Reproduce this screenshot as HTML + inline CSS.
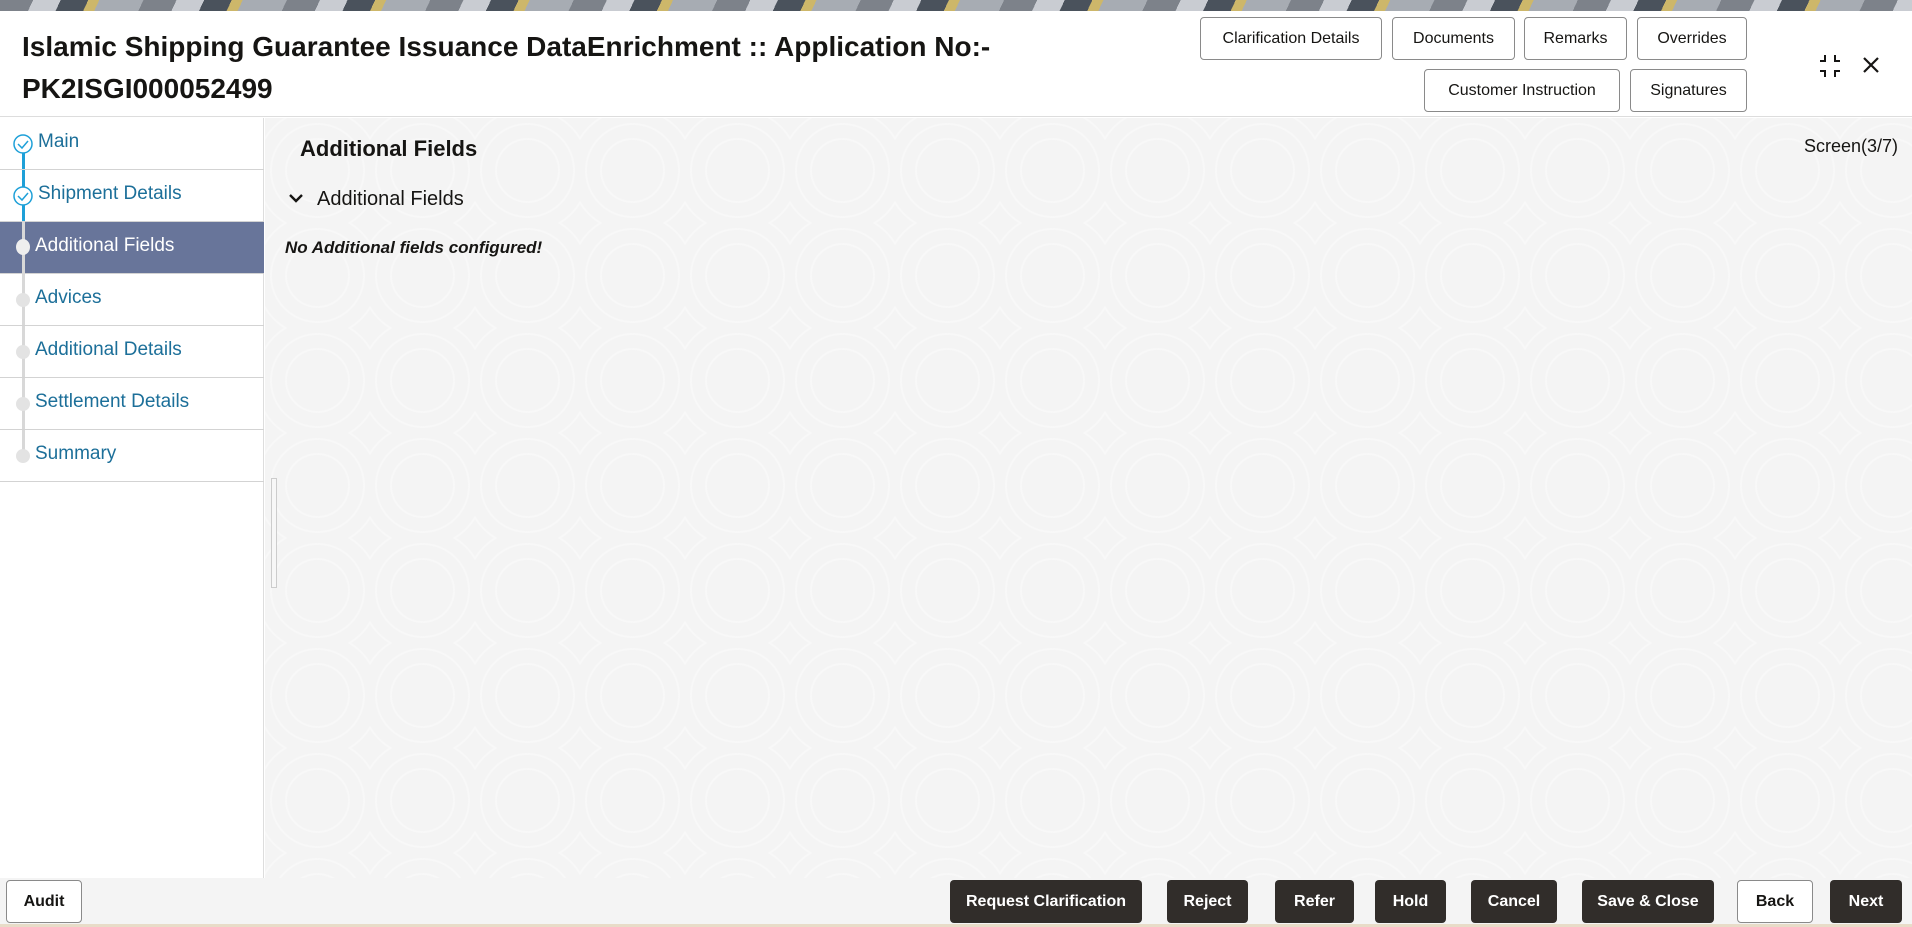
<!DOCTYPE html>
<html><head><meta charset="utf-8"><style>
*{box-sizing:border-box;margin:0;padding:0}
body{width:1912px;height:927px;overflow:hidden;font-family:"Liberation Sans",sans-serif;background:#fff;position:relative}
.banner{position:absolute;left:0;top:0;width:1912px;height:11px;background:repeating-linear-gradient(115deg,#7d828a 0 30px,#c9ccd2 30px 55px,#4a525c 55px 80px,#cdb76a 80px 90px,#a7acb3 90px 130px)}
.hdr{position:absolute;left:0;top:11px;width:1912px;height:106px;background:#fff;border-bottom:1px solid #ddd}
.title{position:absolute;left:22px;top:15px;font-size:28px;font-weight:bold;color:#161513;line-height:42px}
.ob{position:absolute;height:43px;border:1px solid #8a8a8a;border-radius:4px;background:#fff;font-size:16px;color:#161513;display:flex;align-items:center;justify-content:center}
.side{position:absolute;left:0;top:118px;width:264px;height:760px;background:#fff;border-right:1px solid #ddd}
.it{position:absolute;left:0;width:264px;height:52px;border-bottom:1px solid #d3d3d3;font-size:19px;color:#1c6f99;padding-left:35px;line-height:48px}
.it.act{background:#68759a;color:#fff}
.vl{position:absolute;left:22px;width:3px}
.dot{position:absolute;left:16px;width:14px;height:14px;border-radius:50%;background:#e3e3e3}
.main{position:absolute;left:265px;top:118px;width:1647px;height:762px;background:#f4f4f4;background-image:radial-gradient(circle at 50% 50%,transparent 0 30px,rgba(255,255,255,.35) 31px 32px,transparent 33px 45px,rgba(255,255,255,.35) 46px 47px,transparent 48px 60px,rgba(255,255,255,.35) 61px 62px,transparent 63px);background-size:105px 105px}
.foot{position:absolute;left:0;top:878px;width:1912px;height:46px;background:#f4f4f4}
.db{position:absolute;top:880px;height:43px;background:#312d2a;color:#fff;border-radius:4px;font-size:16px;font-weight:bold;display:flex;align-items:center;justify-content:center}
.wb{position:absolute;top:880px;height:43px;background:#fff;color:#161513;border:1px solid #8a8a8a;border-radius:4px;font-size:16px;font-weight:bold;display:flex;align-items:center;justify-content:center}
</style></head><body>
<div class="banner"></div>
<div class="hdr">
<div class="title">Islamic Shipping Guarantee Issuance DataEnrichment :: Application No:-<br>PK2ISGI000052499</div>
</div>
<div class="ob" style="left:1200px;top:17px;width:182px">Clarification Details</div>
<div class="ob" style="left:1392px;top:17px;width:123px">Documents</div>
<div class="ob" style="left:1524px;top:17px;width:103px">Remarks</div>
<div class="ob" style="left:1637px;top:17px;width:110px">Overrides</div>
<div class="ob" style="left:1424px;top:69px;width:196px">Customer Instruction</div>
<div class="ob" style="left:1630px;top:69px;width:117px">Signatures</div>
<svg style="position:absolute;left:1816px;top:52px" width="28" height="28" viewBox="0 0 28 28" fill="none" stroke="#161513" stroke-width="2"><path d="M9 3v6H4M19 3v6h5M9 25v-6H4M19 25v-6h5"/></svg>
<svg style="position:absolute;left:1862px;top:56px" width="18" height="18" viewBox="0 0 18 18" stroke="#161513" stroke-width="2.2"><path d="M2 2L16 16M16 2L2 16"/></svg>

<div class="side">
<div class="vl" style="top:26px;height:96px;background:#1ea0d8"></div>
<div class="vl" style="top:122px;height:212px;background:#d8d8d8"></div>
<div class="it" style="top:0"><span style="padding-left:3px">Main</span></div>
<div class="it" style="top:52px"><span style="padding-left:3px">Shipment Details</span></div>
<div class="it act" style="top:104px">Additional Fields</div>
<div class="it" style="top:156px">Advices</div>
<div class="it" style="top:208px">Additional Details</div>
<div class="it" style="top:260px">Settlement Details</div>
<div class="it" style="top:312px">Summary</div>
<div class="vl" style="top:104px;height:52px;background:#d8d8d8"></div>
<svg style="position:absolute;left:12px;top:15px" width="22" height="22" viewBox="0 0 22 22" fill="#fff" stroke="#1ea0d8" stroke-width="1.5"><circle cx="11" cy="11" r="9"/><path d="M6 11l4 4 6-7" fill="none"/></svg>
<svg style="position:absolute;left:12px;top:67px" width="22" height="22" viewBox="0 0 22 22" fill="#fff" stroke="#1ea0d8" stroke-width="1.5"><circle cx="11" cy="11" r="9"/><path d="M6 11l4 4 6-7" fill="none"/></svg>
<div class="dot" style="top:121px;background:#eee;height:16px"></div>
<div class="dot" style="top:175px"></div>
<div class="dot" style="top:227px"></div>
<div class="dot" style="top:279px"></div>
<div class="dot" style="top:331px"></div>
</div>

<div class="main">
<div style="position:absolute;left:35px;top:18px;font-size:22px;font-weight:bold;color:#161513">Additional Fields</div>
<div style="position:absolute;right:14px;top:18px;font-size:18px;color:#161513">Screen(3/7)</div>
<svg style="position:absolute;left:23px;top:75px" width="16" height="12" viewBox="0 0 16 12" fill="none" stroke="#161513" stroke-width="2.4"><path d="M2 2l6 6 6-6"/></svg>
<div style="position:absolute;left:52px;top:70px;font-size:20px;color:#161513">Additional Fields</div>
<div style="position:absolute;left:20px;top:120px;font-size:17px;font-weight:bold;font-style:italic;color:#161513">No Additional fields configured!</div>
<div style="position:absolute;left:6px;top:360px;width:6px;height:110px;border:1px solid #ccc;background:#f7f7f7"></div>
</div>

<div class="foot"></div>
<div style="position:absolute;left:0;top:924px;width:1912px;height:3px;background:#e8dcc8"></div>
<div class="wb" style="left:6px;width:76px">Audit</div>
<div class="db" style="left:950px;width:192px">Request Clarification</div>
<div class="db" style="left:1167px;width:81px">Reject</div>
<div class="db" style="left:1275px;width:79px">Refer</div>
<div class="db" style="left:1375px;width:71px">Hold</div>
<div class="db" style="left:1471px;width:86px">Cancel</div>
<div class="db" style="left:1582px;width:132px">Save &amp; Close</div>
<div class="wb" style="left:1737px;width:76px">Back</div>
<div class="db" style="left:1830px;width:72px">Next</div>
</body></html>
